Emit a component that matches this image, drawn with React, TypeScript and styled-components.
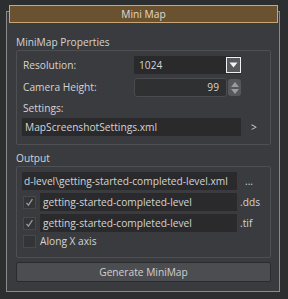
import React from "react";
import styled, { createGlobalStyle } from "styled-components";

const Global = createGlobalStyle`
  html, body { margin: 0; padding: 0; background: #2d2e30; }
  body { font-family: "Open Sans", "Noto Sans", sans-serif; font-size: 10.2px; color: #d4d4d4; }
  * { box-sizing: border-box; }
`;

const Page = styled.div`
  width: 288px;
  height: 299px;
  padding: 11px 8px 0 6px;
  background: #2d2e30;
`;

const Frame = styled.div`
  position: relative;
  width: 274px;
  height: 281px;
  border: 1px solid #8a8a8a;
  background: #3a3b3e;
  padding: 22px 8px 0 9px;
  display: flex;
  flex-direction: column;
`;

const Title = styled.div`
  position: absolute;
  top: -7px;
  left: 2px;
  width: 269px;
  height: 18px;
  background: #6a5130;
  border: 1px solid #c9a774;
  color: #e2dbcf;
  display: flex;
  align-items: center;
  justify-content: center;
  line-height: 1;
`;

const SectionLabel = styled.div<{ $mt?: number }>`
  height: 16px;
  line-height: 16px;
  margin-top: ${(p) => p.$mt ?? 0}px;
`;

const Group = styled.div<{ $h: number }>`
  height: ${(p) => p.$h}px;
  border: 1px solid #4e4f52;
  border-radius: 2px;
  padding: 5px 0 0 5px;
`;

const Grid = styled.div`
  display: grid;
  grid-template-columns: 111px 107px;
  row-gap: 4px;
  padding-left: 1px;
`;

const Label = styled.div`
  display: flex;
  align-items: center;
  height: 18px;
`;

const Combo = styled.div`
  display: flex;
  height: 18px;
  background: #2a2a2c;
`;

const ComboText = styled.div`
  flex: 1;
  padding-left: 5px;
  line-height: 18px;
`;

const DropBtn = styled.div`
  width: 15px;
  height: 16px;
  margin-top: 1px;
  border: 1px solid #f0f0f0;
  background: #58595c;
  display: flex;
  align-items: center;
  justify-content: center;
`;

const Spin = styled.div`
  display: flex;
  height: 19px;
  gap: 1px;
`;

const SpinField = styled.div`
  flex: 1;
  border: 1px solid #4a4b4e;
  border-radius: 3px;
  background: #2f3032;
  text-align: right;
  padding-right: 7px;
  line-height: 17px;
`;

const SpinBtns = styled.div`
  width: 13px;
  margin-top: 1px;
  height: 17px;
  border-radius: 3px;
  background: #56575a;
  display: flex;
  flex-direction: column;
  align-items: center;
  justify-content: center;
  gap: 2px;
`;

const SettingsLabel = styled.div`
  height: 18px;
  line-height: 18px;
  margin-top: 2px;
  padding-left: 1px;
`;

const FieldRow = styled.div<{ $gap?: number }>`
  display: flex;
  align-items: center;
  margin-top: ${(p) => p.$gap ?? 0}px;
`;

const Field = styled.div<{ $w: number; $pad?: number }>`
  width: ${(p) => p.$w}px;
  height: 18px;
  background: #2a2a2c;
  line-height: 18px;
  padding-left: ${(p) => p.$pad ?? 2}px;
  white-space: nowrap;
  overflow: hidden;
`;

const Suffix = styled.div<{ $ml: number }>`
  margin-left: ${(p) => p.$ml}px;
  line-height: 18px;
`;

const Check = styled.div`
  width: 13px;
  height: 13px;
  border: 1px solid #47484b;
  background: #333436;
  display: flex;
  align-items: center;
  justify-content: center;
  margin-right: 4px;
  margin-left: 1px;
  flex: none;
`;

const Button = styled.div`
  margin-top: 4px;
  height: 20px;
  border: 1px solid #2a2b2d;
  border-radius: 2px;
  background: #4c4d50;
  display: flex;
  align-items: center;
  justify-content: center;
  color: #d0d0d0;
`;

const Tick = () => (
  <svg width="9" height="9" viewBox="0 0 9 9">
    <path d="M1.5 4.8 L3.4 7.2 L7.4 1.2" stroke="#9a9a9a" strokeWidth="1.3" fill="none" />
  </svg>
);

export default function App() {
  return (
    <>
      <Global />
      <Page>
        <Frame>
          <Title>Mini Map</Title>
          <SectionLabel>MiniMap Properties</SectionLabel>
          <Group $h={95}>
            <Grid>
              <Label>Resolution:</Label>
              <Combo>
                <ComboText>1024</ComboText>
                <DropBtn>
                  <svg width="9" height="6" viewBox="0 0 9 6">
                    <path d="M0.5 0.5 L8.5 0.5 L4.5 5.5 Z" fill="#f2f2f2" />
                  </svg>
                </DropBtn>
              </Combo>
              <Label>Camera Height:</Label>
              <Spin>
                <SpinField>99</SpinField>
                <SpinBtns>
                  <svg width="8" height="5" viewBox="0 0 8 5">
                    <path d="M0 5 L8 5 L4 0 Z" fill="#9a9b9e" />
                  </svg>
                  <svg width="8" height="5" viewBox="0 0 8 5">
                    <path d="M0 0 L8 0 L4 5 Z" fill="#9a9b9e" />
                  </svg>
                </SpinBtns>
              </Spin>
            </Grid>
            <SettingsLabel>Settings:</SettingsLabel>
            <FieldRow $gap={1}>
              <Field $w={219} $pad={3}>MapScreenshotSettings.xml</Field>
              <Suffix $ml={10}>&gt;</Suffix>
            </FieldRow>
          </Group>
          <SectionLabel $mt={5}>Output</SectionLabel>
          <Group $h={92}>
            <FieldRow>
              <Field $w={215} $pad={2}>d-level\getting-started-completed-level.xml</Field>
              <Suffix $ml={8}>...</Suffix>
            </FieldRow>
            <FieldRow $gap={3}>
              <Check><Tick /></Check>
              <Field $w={197} $pad={3}>getting-started-completed-level</Field>
              <Suffix $ml={3}>.dds</Suffix>
            </FieldRow>
            <FieldRow $gap={3}>
              <Check><Tick /></Check>
              <Field $w={197} $pad={3}>getting-started-completed-level</Field>
              <Suffix $ml={3}>.tif</Suffix>
            </FieldRow>
            <FieldRow $gap={2}>
              <Check />
              <span>Along X axis</span>
            </FieldRow>
          </Group>
          <Button>Generate MiniMap</Button>
        </Frame>
      </Page>
    </>
  );
}
